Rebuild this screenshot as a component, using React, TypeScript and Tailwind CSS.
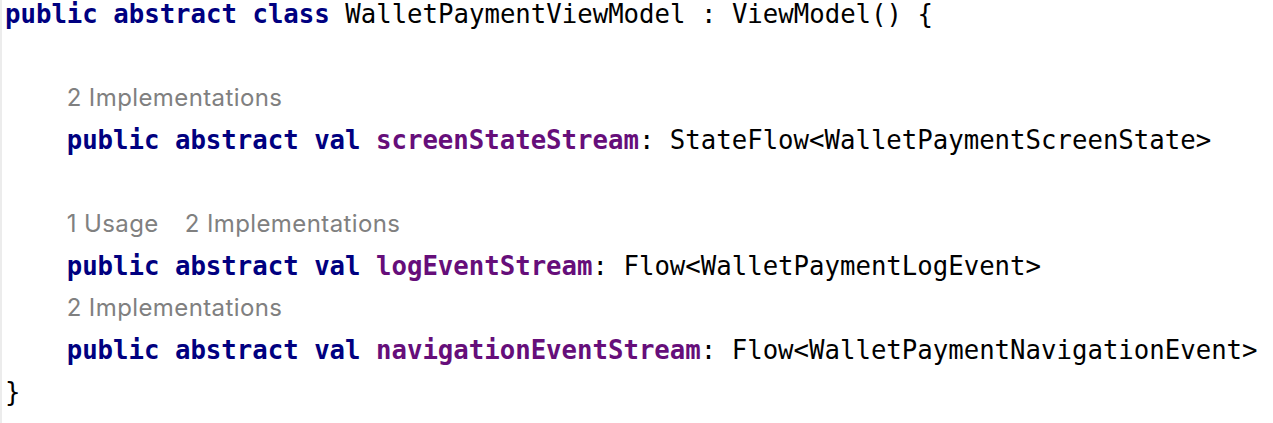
import React from "react";

const K = ({ children }: { children: React.ReactNode }) => (
  <span className="font-bold text-[#000080]">{children}</span>
);
const F = ({ children }: { children: React.ReactNode }) => (
  <span className="font-bold text-[#660e7a]">{children}</span>
);

const Code = ({ children, indent = false }: { children?: React.ReactNode; indent?: boolean }) => (
  <div className={`h-[42px] whitespace-pre ${indent ? "pl-[61.7px]" : ""}`}>{children}</div>
);

const Hint = ({ children }: { children: React.ReactNode }) => (
  <div className="h-[42px] pl-[61.7px] flex items-center gap-[26px] text-[#808080] text-[24px] tracking-[0.4px] [font-family:Inter,'Noto_Sans',sans-serif]">
    {children}
  </div>
);

export default function App() {
  return (
    <div className="w-[1273px] h-[423px] overflow-hidden bg-white border-l-2 border-[#ececec]">
      <div className="-mt-[7px] pl-[3px] text-black text-[25.7px] leading-[42px] [font-family:'DejaVu_Sans_Mono','Liberation_Mono',monospace]">
        <Code>
          <K>public abstract class</K> WalletPaymentViewModel : ViewModel() {"{"}
        </Code>
        <Code />
        <Hint>
          <span>2 Implementations</span>
        </Hint>
        <Code indent>
          <K>public abstract val</K> <F>screenStateStream</F>: StateFlow&lt;WalletPaymentScreenState&gt;
        </Code>
        <Code />
        <Hint>
          <span>1 Usage</span>
          <span>2 Implementations</span>
        </Hint>
        <Code indent>
          <K>public abstract val</K> <F>logEventStream</F>: Flow&lt;WalletPaymentLogEvent&gt;
        </Code>
        <Hint>
          <span>2 Implementations</span>
        </Hint>
        <Code indent>
          <K>public abstract val</K> <F>navigationEventStream</F>: Flow&lt;WalletPaymentNavigationEvent&gt;
        </Code>
        <Code>{"}"}</Code>
      </div>
    </div>
  );
}
